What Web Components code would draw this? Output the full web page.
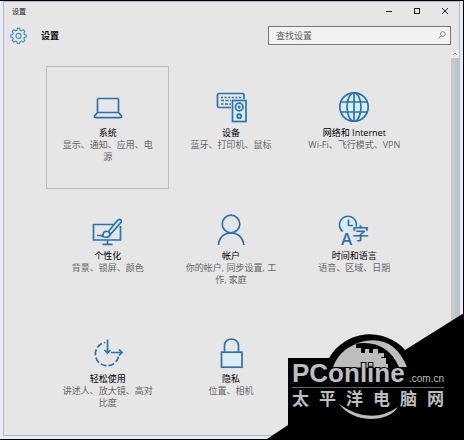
<!DOCTYPE html>
<html lang="zh-CN">
<head>
<meta charset="utf-8">
<title>设置</title>
<style>
  * { box-sizing: border-box; }
  html { height: 100%; }
  body {
    margin: 0;
    min-height: 100%;
    display: flex;
    position: relative;
    padding: 1px 1px 2px 0;
    background: #000;
    font-family: "Open Sans", "Noto Sans CJK SC", sans-serif;
    font-size: 9px;
    color: #1a1a1a;
  }
</style>
</head>
<body>
  <settings-window>
    <title-bar slot="title">设置</title-bar>
    <settings-header slot="header">设置</settings-header>
    <settings-tile icon="laptop" selected>系统<span slot="desc">显示、通知、应用、电源</span></settings-tile>
    <settings-tile icon="devices">设备<span slot="desc">蓝牙、打印机、鼠标</span></settings-tile>
    <settings-tile icon="globe">网络和 Internet<span slot="desc">Wi-Fi、飞行模式、VPN</span></settings-tile>
    <settings-tile icon="brush">个性化<span slot="desc">背景、锁屏、颜色</span></settings-tile>
    <settings-tile icon="person">帐户<span slot="desc">你的帐户, 同步设置, 工作, 家庭</span></settings-tile>
    <settings-tile icon="time">时间和语言<span slot="desc">语音、区域、日期</span></settings-tile>
    <settings-tile icon="ease">轻松使用<span slot="desc">讲述人、放大镜、高对比度</span></settings-tile>
    <settings-tile icon="lock">隐私<span slot="desc">位置、相机</span></settings-tile>
  </settings-window>
  <site-watermark></site-watermark>

<script>
const ICONS = {
  laptop: `
    <rect x="7.5" y="9.5" width="21" height="14" rx="1"/>
    <path d="M7.500 23.500 4.500 27q-.6 1.600 1.500 1.600h24q2.100 0 1.500-1.600l-3-3.500"/>`,
  devices: `
    <path d="M18 18.500H6q-1.500 0-1.500-1.500V6q0-1.500 1.500-1.500h23.500Q31 4.500 31 6v4"/>
    <path d="M8 8.500h20" stroke-dasharray="2 1.600"/>
    <path d="M8 11.500h10M8 15h2.500M12 15h6" stroke-dasharray="3 1.500"/>
    <rect x="19.500" y="11.500" width="13.500" height="21" fill="#d8eefa"/>
    <circle cx="26.200" cy="18" r="3.800"/><circle cx="26.200" cy="18" r=".7"/>
    <circle cx="26.200" cy="27.200" r="2"/>`,
  globe: `
    <circle cx="18" cy="18" r="14.200" fill="#d8eefa"/>
    <ellipse cx="18" cy="18" rx="7" ry="14.200"/>
    <path d="M18 4v28M5 13h26M5 23h26"/>`,
  brush: `
    <path d="M24 12.500H3.500v15.500h27V14M17.500 28v4M12.500 32.300h10"/>
    <path d="M18 20 27 9q2-2.500 3.700-1.100T30 11.500L20.500 22.300z" fill="#d8eefa"/>
    <path d="M7 23.500h6q0-4.500 4-4 3.500.500 3 3.500-1 3-6 2-1.500-.500-3-1.500z" fill="#d8eefa"/>`,
  person: `
    <circle cx="18" cy="12" r="8.800"/>
    <path d="M5.500 33c.5-7.500 5.500-12.200 12.500-12.200S30 25.500 30.800 33"/>`,
  time: `
    <path d="M6.800 19.500A8.500 8.500 0 1 1 20.300 14.500" fill="#d8eefa"/>
    <path d="M12.500 7.500v6h4.500"/>
    <g fill="#2a72b0" stroke="none">
      <text x="5" y="33" font-size="17" font-family="Open Sans, sans-serif" font-weight="600">A</text>
      <text x="16" y="28" font-size="17" font-family="Noto Sans CJK SC, sans-serif" font-weight="500">字</text>
    </g>`,
  ease: `
    <path d="M28.500 21.500A11.700 11.700 0 1 1 15 7.500" stroke-dasharray="6 2.200"/>
    <path d="M17.500 4.500v13M14.500 15l3 3 3-3M21 17.500h11M29 14.500l3 3-3 3"/>`,
  lock: `
    <path d="M11.500 17v-6.500a7 6.500 0 0 1 14 0V17"/>
    <rect x="8.500" y="17.200" width="20.500" height="15" fill="#deeef8"/>`
};

class SettingsWindow extends HTMLElement {
  connectedCallback() {
    this.attachShadow({ mode: 'open' }).innerHTML = `
      <style>
        :host {
          display: flex;
          flex: 1;
          padding: 0 3px 3px 3px;
          background: #e9edf3;
        }
        .frame {
          flex: 1;
          display: flex;
          flex-direction: column;
          border: 1px solid #a9bccb;
          border-right-color: #b4bccb;
          background: #e6e6e6;
        }
        .content { flex: 1; display: flex; }
        main {
          flex: 1;
          display: grid;
          grid-template-columns: repeat(3, 1fr);
          grid-auto-rows: minmax(123px, auto);
          align-content: start;
          padding: 16px 35px 0 42px;
        }
        .scroll {
          width: 8px;
          display: flex;
          flex-direction: column;
          background: #eceef0;
        }
        .scroll svg { width: 8px; height: 8px; }
        .thumb {
          flex: 1;
          background: linear-gradient(90deg, #c8cbc5 50%, #bec2cc 50%);
        }
      </style>
      <div class="frame">
        <slot name="title"></slot>
        <slot name="header"></slot>
        <div class="content">
          <main><slot></slot></main>
          <div class="scroll">
            <svg viewBox="0 0 8 8" fill="none" stroke="#999"><path d="M2 5l2-2 2 2"/></svg>
            <div class="thumb"></div>
          </div>
        </div>
      </div>
    `;
  }
}

class TitleBar extends HTMLElement {
  connectedCallback() {
    this.attachShadow({ mode: 'open' }).innerHTML = `
      <style>
        :host {
          display: flex;
          align-items: center;
          justify-content: space-between;
          height: 18px;
          padding-left: 8px;
          font-size: 7px;
        }
        .buttons { display: flex; }
        button {
          width: 28px;
          height: 18px;
          padding: 0;
          border: 0;
          background: none;
          display: grid;
          place-items: center;
        }
        svg { width: 8px; height: 8px; fill: none; stroke: #222; }
      </style>
      <slot></slot>
      <div class="buttons">
        <button aria-label="最小化"><svg viewBox="0 0 8 8"><path d="M1 4.500h6"/></svg></button>
        <button aria-label="最大化"><svg viewBox="0 0 8 8"><rect x="1.500" y="1.500" width="5" height="5"/></svg></button>
        <button aria-label="关闭"><svg viewBox="0 0 8 8"><path d="M1 1l6 6M7 1 1 7"/></svg></button>
      </div>
    `;
  }
}

class SettingsHeader extends HTMLElement {
  connectedCallback() {
    this.attachShadow({ mode: 'open' }).innerHTML = `
      <style>
        :host {
          display: flex;
          align-items: center;
          height: 30px;
          padding: 0 8px 0 6px;
        }
        h1 {
          flex: 1;
          margin: 0 0 0 14px;
          font-size: 9px;
          font-weight: 700;
          color: #000;
        }
        .gear { width: 17px; height: 17px; }
        .search {
          display: flex;
          align-items: center;
          box-sizing: border-box;
          width: 183px;
          height: 19px;
          padding: 0 4px 0 7px;
          border: 1px solid #777;
          background: #f2f2f2;
        }
        input {
          flex: 1;
          min-width: 0;
          padding: 0;
          border: 0;
          outline: 0;
          background: none;
          font: inherit;
        }
        input::placeholder { color: #5e5e5e; opacity: 1; }
        .search svg { width: 8px; height: 8px; }
      </style>
      <svg class="gear" viewBox="0 0 18 18" fill="#d9eefa" stroke="#4f87b3" stroke-width="1.200">
        <path d="M7.800 1.500h2.400l.500 2 1.400.600 1.900-1.100 1.700 1.700-1.100 1.900.6 1.400 2 .5v1.900l-2 .6-.600 1.400 1.100 1.900-1.700 1.700-1.900-1.100-1.400.6-.5 2H7.800l-.5-2-1.400-.6L4 16 2.300 14.300l1.100-1.900L2.800 11l-2-.6V8.500l2-.5.600-1.400L2.300 4.700 4 3l1.900 1.100 1.400-.6z"/>
        <circle cx="9" cy="9.400" r="2.700" fill="#e6e6e6"/>
      </svg>
      <h1><slot></slot></h1>
      <div class="search">
        <input type="text" placeholder="查找设置" aria-label="查找设置">
        <svg viewBox="0 0 8 8" fill="none" stroke="#888"><circle cx="4.800" cy="3" r="2.400"/><path d="M3 4.800.5 7.500"/></svg>
      </div>
    `;
  }
}

class SettingsTile extends HTMLElement {
  connectedCallback() {
    this.attachShadow({ mode: 'open' }).innerHTML = `
      <style>
        :host { display: block; text-align: center; }
        a {
          display: flex;
          flex-direction: column;
          align-items: center;
          box-sizing: border-box;
          height: 100%;
          padding: 22px 12px 0;
          border: 1px solid transparent;
          color: inherit;
          text-decoration: none;
        }
        :host([selected]) a { border-color: #bcbcbc; }
        svg {
          width: 36px;
          height: 36px;
          overflow: visible;
          fill: none;
          stroke: #2a72b0;
          stroke-width: 1.7;
        }
        .name { padding-top: 1px; line-height: 13px; color: #000; }
        .desc { line-height: 12px; color: #666; }
      </style>
      <a href="#${this.getAttribute('icon')}">
        <svg viewBox="0 0 36 36" aria-hidden="true">${ICONS[this.getAttribute('icon')]}</svg>
        <div class="name"><slot></slot></div>
        <div class="desc"><slot name="desc"></slot></div>
      </a>
    `;
  }
}

class SiteWatermark extends HTMLElement {
  connectedCallback() {
    this.attachShadow({ mode: 'open' }).innerHTML = `
      <style>
        :host {
          display: flow-root;
          position: absolute;
          right: 0;
          bottom: 0;
          width: 200px;
          height: 140px;
          color: #bdbdbd;
        }
        svg { position: absolute; inset: 0; }
        .text {
          position: relative;
          margin: 58px 20px 0 28px;
        }
        .brand {
          display: flex;
          align-items: baseline;
          justify-content: space-between;
          height: 28px;
          border-bottom: 1px solid #666;
          font-family: "Liberation Sans", sans-serif;
          font-size: 10px;
          line-height: 12px;
        }
        b {
          font-size: 26px;
          line-height: 28px;
          -webkit-text-stroke: 2px #000;
          paint-order: stroke fill;
        }
        .cn {
          font-family: "Noto Sans CJK SC", sans-serif;
          font-size: 17px;
          font-weight: 700;
          line-height: 20px;
          text-align-last: justify;
        }
      </style>
      <svg viewBox="0 0 200 140" aria-hidden="true">
        <path d="M200 12 141 49A47 47 0 0 0 65 57H24v67L0 140h200z"/>
        <g fill="#bdbdbd">
          <path d="M69 66A39 39 0 0 1 92 43v4h5v5h4v-4h4v4h4v-4h5v5h3v4h5v4h-5v2h7v4z"/>
          <path d="M115 52h5v4h-5zM117 61h5v4h-5z"/>
          <path d="M90 43q38-14 53 23h-8Q122 37 90 43z"/>
          <path d="M75 103q31 22 59 3-8 12-28 12-20-1-31-15z"/>
        </g>
      </svg>
      <div class="text">
        <div class="brand"><b>PConline</b><span>.com.cn</span></div>
        <div class="cn">太平洋电脑网</div>
      </div>
    `;
  }
}

customElements.define('settings-window', SettingsWindow);
customElements.define('title-bar', TitleBar);
customElements.define('settings-header', SettingsHeader);
customElements.define('settings-tile', SettingsTile);
customElements.define('site-watermark', SiteWatermark);
</script>
</body>
</html>
